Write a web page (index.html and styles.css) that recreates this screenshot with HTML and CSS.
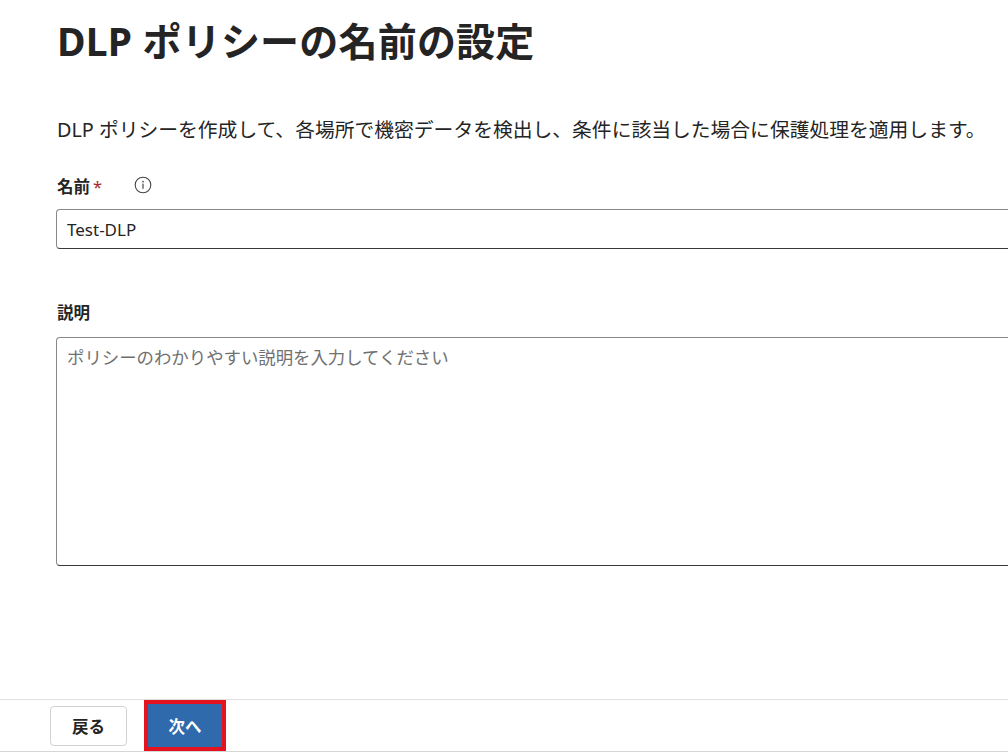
FILE: index.html
```html
<!DOCTYPE html>
<html lang="ja">
<head>
  <meta charset="UTF-8" />
  <title>DLP ポリシーの名前の設定</title>
  <link rel="stylesheet" href="styles.css">
</head>
<body>
  <main class="page">
    <h1 class="title">DLP ポリシーの名前の設定</h1>
    <p class="intro">DLP ポリシーを作成して、各場所で機密データを検出し、条件に該当した場合に保護処理を適用します。</p>

    <div class="field">
      <label class="label" for="policy-name">名前 <span class="req">*</span>
        <span class="info" title="情報">
          <svg width="18" height="18" viewBox="0 0 18 18">
            <circle cx="9" cy="9" r="7.8" fill="none" stroke="#444" stroke-width="1.1" />
            <rect x="8.4" y="7.6" width="1.2" height="5.2" fill="#444" />
            <circle cx="9" cy="5.6" r="0.85" fill="#444" />
          </svg>
        </span>
      </label>
      <input class="text-input" id="policy-name" type="text" value="Test-DLP">
    </div>

    <div class="field field-desc">
      <label class="label" for="policy-desc">説明</label>
      <textarea class="text-area" id="policy-desc" placeholder="ポリシーのわかりやすい説明を入力してください"></textarea>
    </div>
  </main>

  <footer class="footer">
    <button class="btn btn-back">戻る</button>
    <button class="btn btn-next">次へ</button>
  </footer>
</body>
</html>
```

FILE: styles.css
```css
html, body {
  height: 100%;
}

body {
  margin: 0;
  background: #fff;
  color: #242424;
  font-family: "Noto Sans", "Noto Sans CJK JP", sans-serif;
  overflow: hidden;
  display: flex;
  flex-direction: column;
}

.page {
  padding: 16px 0 0 57px;
}

.title {
  margin: 0;
  font-size: 39px;
  line-height: 50px;
  font-weight: 700;
  letter-spacing: 0.2px;
  white-space: nowrap;
}

.intro {
  margin: 50px 0 0;
  font-size: 19.8px;
  line-height: 28px;
  white-space: nowrap;
}

.field {
  margin-top: 31px;
}

.field-desc {
  margin-top: 52px;
}

.label {
  display: flex;
  align-items: center;
  font-size: 16.5px;
  line-height: 24px;
  font-weight: 700;
  margin-bottom: 10px;
}

.field-desc .label {
  margin-bottom: 12px;
}

.req {
  color: #a4262c;
  margin-left: 3px;
  font-weight: 400;
}

.info {
  display: inline-flex;
  margin-left: 32px;
  margin-top: -4px;
}

/* the fields run on past the right edge of the window */
.text-input,
.text-area {
  display: block;
  box-sizing: border-box;
  width: calc(100% + 1px);
  margin-left: -1px;
  border: 1px solid #8a8886;
  border-right: none;
  border-bottom-color: #3b3a39;
  border-radius: 4px 0 0 4px;
  font-family: inherit;
  color: #242424;
  background: #fff;
  outline: none;
}

.text-input {
  height: 40px;
  padding: 0 10px;
  font-size: 17px;
}

.text-area {
  height: 229px;
  padding: 7px 10px;
  font-size: 17.4px;
  line-height: 24px;
  resize: none;
}

.text-area::placeholder {
  color: #707070;
}

.footer {
  margin-top: auto;
  height: 51px;
  border-top: 1px solid #e1dfdd;
  border-bottom: 1px solid #d6d6d6;
  padding-left: 50px;
  display: flex;
  align-items: flex-start;
}

.btn {
  font-family: inherit;
  font-size: 16.5px;
  font-weight: 700;
  border-radius: 4px;
  cursor: pointer;
}

.btn-back {
  margin-top: 6px;
  width: 77px;
  height: 40px;
  background: #fff;
  color: #242424;
  border: 1px solid #d1d1d1;
}

.btn-next {
  margin: 4px 0 0 21px;
  width: 74px;
  height: 43px;
  background: #2f6aad;
  color: #fff;
  border: none;
  border-radius: 0;
  outline: 4px solid #e3141f;
}
```
